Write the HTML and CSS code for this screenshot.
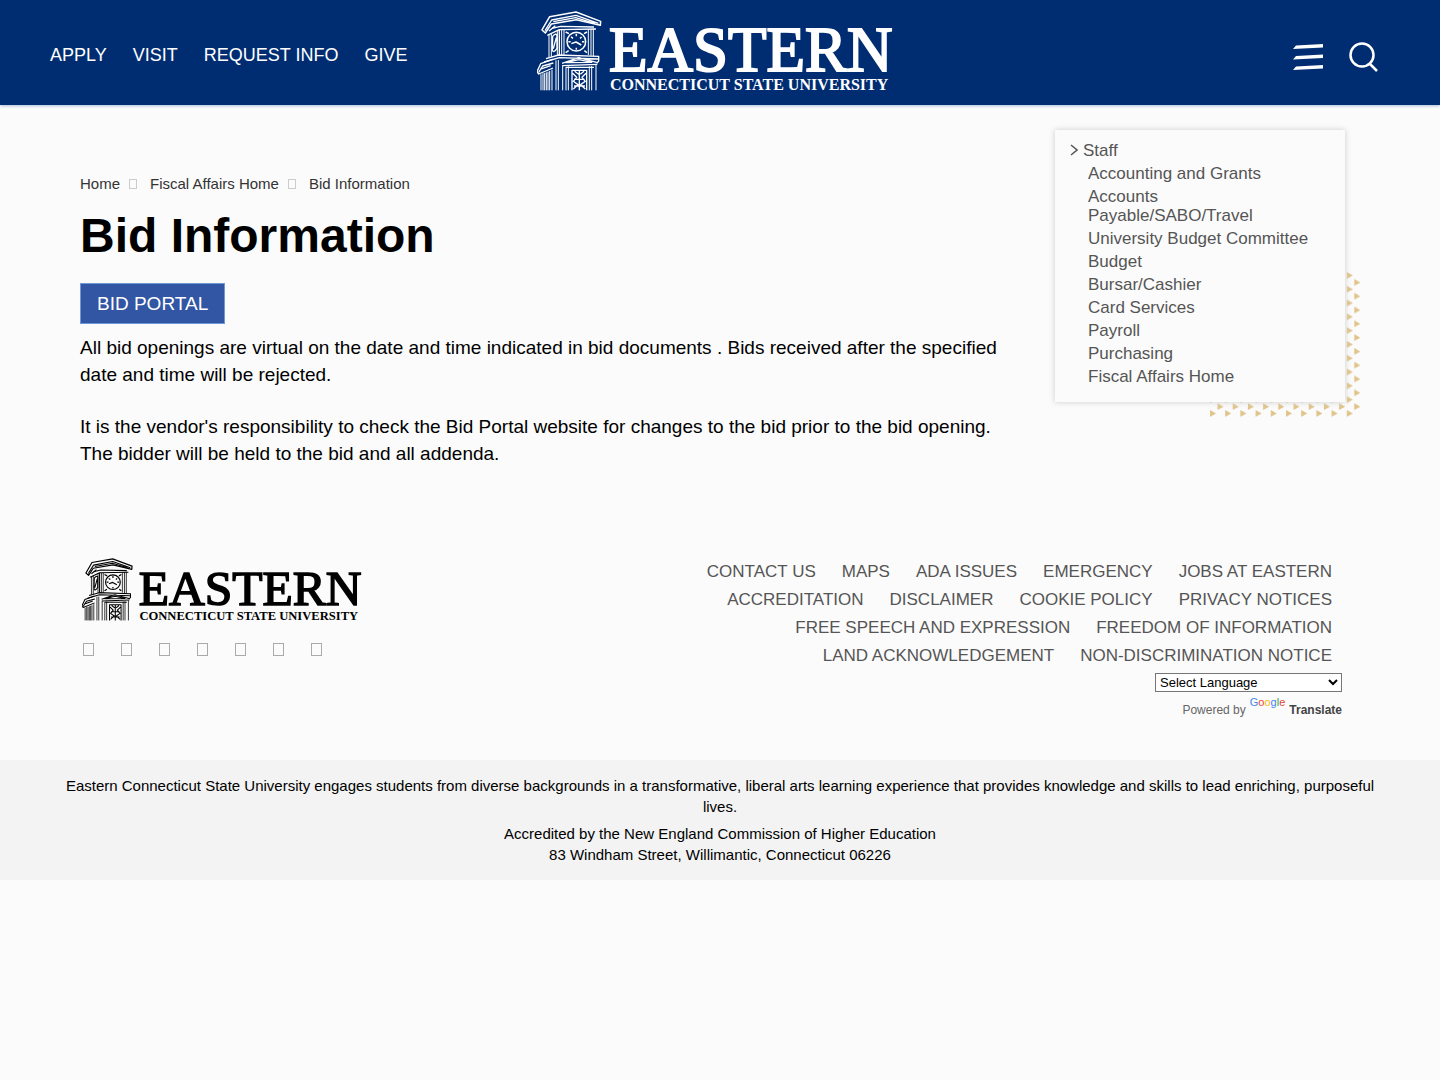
FILE: index.html
```html
<!DOCTYPE html>
<html lang="en">
<head>
    <meta charset="UTF-8">
    <meta name="viewport" content="width=device-width, initial-scale=1.0">
    <title>Bid Information - Eastern Connecticut State University</title>
    <link rel="stylesheet" href="styles.css">
</head>
<body>
    <!-- Shared logo, colored by the parent's text color -->
    <svg class="sprite" aria-hidden="true">
        <symbol id="logo" viewBox="0 0 356 80">
            <g transform="scale(.3333) translate(-17 -18)" fill="none" stroke="currentColor" stroke-width="4" stroke-linejoin="round">
                <path d="M32 75 L55 35 L134 21 L208 49 L207 61 L135 44 L60 57 L42 84 Z" stroke-width="4.5"/>
                <path d="M41 77 L61 45 L134 31 L201 55 M66 50 L133 38 L190 55 M53 78 L72 62"/>
                <path d="M62 70 L88 64 L188 66 M48 91 L84 74 L194 72 M84 74 V150"/>
                <path d="M53 88 V158 M60 85 V155 M78 77 V151 M91 75 V150 M98 75 V150 M171 73 V150 M179 72 V152 M186 71 V153" stroke-width="3"/>
                <path d="M64 94 Q72 84 77 90 V130 Q68 144 63 137 Z M66 131 L75 98"/>
                <circle cx="135" cy="110" r="28" stroke-width="4.5"/>
                <path d="M135 86 V94 M135 128 V134 M111 110 H118 M152 110 H159 M120 116 L134 111 L150 120 M119 96 L125 100 M151 96 L146 100 M103 81 L113 86 M167 81 L158 86 M103 143 L112 137 M167 143 L159 137" stroke-width="4.5"/>
                <path d="M44 161 L82 150 L202 154 V168 L196 175 M38 171 L84 158 L200 162 M92 175 L142 158 L196 172 M104 173 L143 164 L181 172 Z" stroke-width="4"/>
                <path d="M17 200 L28 176 L64 163 M22 202 L34 183 L66 174 M17 200 L22 207 L65 189 M30 192 L58 182 M94 182 L198 178"/>
                <path d="M29 208 V256 M35 205 V256 M40 204 V256 M45 202 V256 M50 200 V256 M55 198 V256 M62 194 V256 M74 166 V256 M81 165 V256 M94 180 V256 M104 186 V256 M111 184 V256 M174 184 V256 M181 183 V256 M194 180 V256" stroke-width="3"/>
                <path d="M104 187 H188 M122 256 V196 H166 V256 M144 198 V256 M124 205 L136 217 L126 229 L140 239 L126 252 M164 205 L152 217 L162 229 L148 239 L162 252 M130 199 L142 208 M158 199 L147 208 M128 223 H160 M128 243 H161"/>
            </g>
            <text class="logo-name" x="72" y="60">EASTERN</text>
            <text class="logo-sub" x="73" y="79">CONNECTICUT STATE UNIVERSITY</text>
        </symbol>
    </svg>

    <header class="site-header">
        <nav class="quick-links" aria-label="Quick links">
            <a href="#">APPLY</a>
            <a href="#">VISIT</a>
            <a href="#">REQUEST INFO</a>
            <a href="#">GIVE</a>
        </nav>
        <a class="header-logo" href="#" aria-label="Eastern Connecticut State University">
            <svg width="356" height="80"><use href="#logo"/></svg>
        </a>
        <div class="header-tools">
            <button type="button" aria-label="Menu">
                <svg width="32" height="28" viewBox="0 0 32 28" fill="currentColor"><path d="M4 2.500 L31 1 V4.500 L1 6 Z M4 13 L31 11.500 V15 L1 16.500 Z M4 23.500 L31 22 V25.500 L1 27 Z"/></svg>
            </button>
            <button type="button" aria-label="Search">
                <svg width="30" height="30" viewBox="0 0 30 30" fill="none" stroke="currentColor" stroke-width="2.500"><circle cx="13" cy="13" r="11.500"/><path d="M20.500 21.500 L28 29"/></svg>
            </button>
        </div>
    </header>

    <main class="page">
        <div class="content">
            <nav class="breadcrumb" aria-label="Breadcrumb">
                <a href="#">Home</a><span class="separator"></span>
                <a href="#">Fiscal Affairs Home</a><span class="separator"></span>
                <span>Bid Information</span>
            </nav>
            <h1>Bid Information</h1>
            <a class="portal-button" href="#">BID PORTAL</a>
            <p>All bid openings are virtual on the date and time indicated in bid documents . Bids received after the specified date and time will be rejected.</p>
            <p>It is the vendor's responsibility to check the Bid Portal website for changes to the bid prior to the bid opening. The bidder will be held to the bid and all addenda.</p>
        </div>

        <aside class="sidebar">
            <svg class="sidebar-pattern" width="151" height="145" aria-hidden="true">
                <defs>
                    <pattern id="triangles" width="15.2" height="13.8" patternUnits="userSpaceOnUse">
                        <path d="M1 0 L7 3.500 L1 7 Z M8.500 7 L14.500 10.500 L8.500 13.800 Z" fill="#e0c48a"/>
                    </pattern>
                </defs>
                <rect width="151" height="145" fill="url(#triangles)"/>
            </svg>
            <nav class="side-menu" aria-label="Fiscal Affairs">
                <a class="side-title" href="#"><svg width="8" height="14" viewBox="0 0 8 14" fill="none" stroke="currentColor" stroke-width="1.500"><path d="M1 1 L7 6 L1 11"/></svg>Staff</a>
                <ul>
                    <li><a href="#">Accounting and Grants</a></li>
                    <li><a href="#">Accounts Payable/SABO/Travel</a></li>
                    <li><a href="#">University Budget Committee</a></li>
                    <li><a href="#">Budget</a></li>
                    <li><a href="#">Bursar/Cashier</a></li>
                    <li><a href="#">Card Services</a></li>
                    <li><a href="#">Payroll</a></li>
                    <li><a href="#">Purchasing</a></li>
                    <li><a href="#">Fiscal Affairs Home</a></li>
                </ul>
            </nav>
        </aside>
    </main>

    <footer>
        <div class="footer-top">
            <div class="footer-brand">
                <a class="footer-logo" href="#" aria-label="Eastern Connecticut State University">
                    <svg width="280" height="63"><use href="#logo"/></svg>
                </a>
                <div class="social">
                    <a href="#" aria-label="Facebook"></a>
                    <a href="#" aria-label="Twitter"></a>
                    <a href="#" aria-label="Instagram"></a>
                    <a href="#" aria-label="YouTube"></a>
                    <a href="#" aria-label="LinkedIn"></a>
                    <a href="#" aria-label="Flickr"></a>
                    <a href="#" aria-label="TikTok"></a>
                </div>
            </div>
            <div class="footer-side">
                <nav class="footer-links" aria-label="Footer">
                    <a href="#">CONTACT US</a>
                    <a href="#">MAPS</a>
                    <a href="#">ADA ISSUES</a>
                    <a href="#">EMERGENCY</a>
                    <a href="#">JOBS AT EASTERN</a>
                    <a href="#">ACCREDITATION</a>
                    <a href="#">DISCLAIMER</a>
                    <a href="#">COOKIE POLICY</a>
                    <a href="#">PRIVACY NOTICES</a>
                    <a href="#">FREE SPEECH AND EXPRESSION</a>
                    <a href="#">FREEDOM OF INFORMATION</a>
                    <a href="#">LAND ACKNOWLEDGEMENT</a>
                    <a href="#">NON-DISCRIMINATION NOTICE</a>
                </nav>
                <select class="language" aria-label="Language Translate Widget">
                    <option>Select Language</option>
                </select>
                <div class="powered">
                    <span>Powered by</span>
                    <a href="#"><span class="google"><i class="blue">G</i><i class="red">o</i><i class="yellow">o</i><i class="blue">g</i><i class="green">l</i><i class="red">e</i></span><b>Translate</b></a>
                </div>
            </div>
        </div>
        <div class="footer-bottom">
            <p>Eastern Connecticut State University engages students from diverse backgrounds in a transformative, liberal arts learning experience that provides knowledge and skills to lead enriching, purposeful lives.</p>
            <p>Accredited by the New England Commission of Higher Education<br>83 Windham Street, Willimantic, Connecticut 06226</p>
        </div>
    </footer>
</body>
</html>
```
FILE: styles.css
```css
* {
    box-sizing: border-box;
}
body {
    margin: 0;
    background: #fbfbfb;
    color: #000;
    font-family: "Liberation Sans", Arial, sans-serif;
    font-size: 19px;
    line-height: 27px;
}
a {
    color: inherit;
    text-decoration: none;
}
svg {
    display: block;
}
.sprite {
    display: none;
}
.logo-name {
    font-family: "Liberation Serif", serif;
    font-size: 63px;
    fill: currentColor;
    stroke: currentColor;
    stroke-width: 2px;
}
.logo-sub {
    font-family: "Liberation Serif", serif;
    font-size: 16px;
    font-weight: bold;
    fill: currentColor;
}

/* Header */
.site-header {
    display: grid;
    grid-template-columns: 1fr auto 1fr;
    align-items: center;
    height: 105px;
    padding: 0 61px 0 50px;
    background: #002d72;
    color: #fff;
    font-size: 18px;
    box-shadow: 0 1px 3px #a9bdd8;
}
.quick-links {
    display: flex;
    gap: 26px;
    padding-top: 6px;
}
.header-logo {
    padding-bottom: 3px;
}
.header-tools {
    display: flex;
    justify-content: flex-end;
    align-items: center;
    gap: 25px;
    padding-top: 8px;
}
.header-tools button {
    padding: 0;
    border: 0;
    background: none;
    color: inherit;
    cursor: pointer;
}

/* Main */
.page {
    display: flex;
    justify-content: space-between;
    align-items: flex-start;
    gap: 50px;
    padding: 25px 95px 0 80px;
}
.content {
    flex: 1;
    padding-top: 42px;
}
.breadcrumb {
    display: flex;
    align-items: center;
    color: #333;
    font-size: 15px;
    line-height: 24px;
}
.separator {
    width: 8px;
    height: 10px;
    margin: 0 13px 0 9px;
    border: 1px solid #ccc;
}
h1 {
    margin: 12px 0 19px;
    font-size: 48px;
    line-height: 56px;
}
.portal-button {
    display: inline-block;
    padding: 6px 16px;
    border: 1px solid #6d9ad6;
    background: #3255a4;
    color: #fff;
    line-height: 27px;
}
.content p {
    margin: 10px 0 25px;
}
.content p + p {
    margin: 0;
}

/* Sidebar */
.sidebar {
    position: relative;
    flex: 0 0 290px;
}
.sidebar-pattern {
    position: absolute;
    right: -15px;
    bottom: -15px;
}
.side-menu {
    position: relative;
    padding: 11px 25px 16px 15px;
    background: #fbfbfb;
    color: #555;
    box-shadow: 0 0 6px #ccc;
    font-size: 17px;
    line-height: 19px;
}
.side-title {
    display: flex;
    align-items: center;
    gap: 5px;
}
.side-menu ul {
    margin: 0;
    padding: 0 0 0 18px;
    list-style: none;
}
.side-menu li {
    margin-top: 4px;
}

/* Footer */
.footer-top {
    display: flex;
    justify-content: space-between;
    padding: 91px 98px 38px 82px;
}
.social {
    display: flex;
    gap: 27px;
    padding: 22px 1px;
}
.social a {
    width: 11px;
    height: 13px;
    border: 1px solid #aaa;
}
.footer-side {
    display: flex;
    flex-direction: column;
    align-items: flex-end;
    max-width: 660px;
}
.footer-links {
    display: flex;
    flex-wrap: wrap;
    justify-content: flex-end;
    column-gap: 26px;
    padding-right: 10px;
    color: #555;
    font-size: 17px;
    line-height: 28px;
}
.language {
    width: 187px;
    height: 19px;
    margin-top: 3px;
    border: 1px solid #767676;
    background: #fff;
    font-family: "Liberation Sans", Arial, sans-serif;
    font-size: 13px;
}
.powered {
    display: flex;
    gap: 4px;
    padding-top: 6px;
    color: #666;
    font-size: 12px;
    line-height: 24px;
}
.powered a {
    display: flex;
    gap: 4px;
    color: #444;
}
.google {
    font-size: 11px;
    line-height: 8px;
}
.google i {
    font-style: normal;
}
.blue {
    color: #4285f4;
}
.red {
    color: #ea4335;
}
.yellow {
    color: #fbbc05;
}
.green {
    color: #34a853;
}
.footer-bottom {
    padding: 15px 60px;
    background: #f3f3f3;
    font-size: 15px;
    line-height: 21px;
    text-align: center;
}
.footer-bottom p {
    margin: 0 0 6px;
}
.footer-bottom p:last-child {
    margin: 0;
}
```
